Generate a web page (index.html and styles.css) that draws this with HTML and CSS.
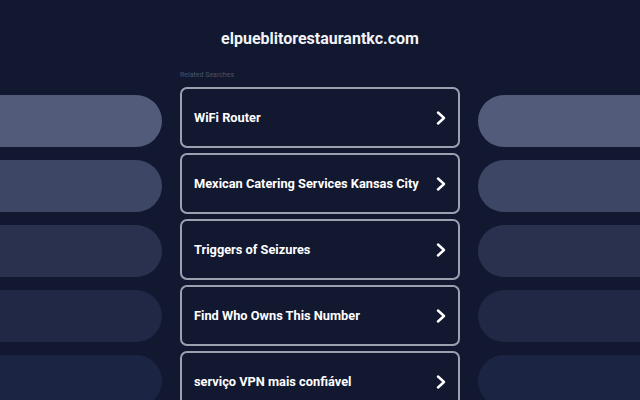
FILE: index.html
```
<!DOCTYPE html>
<html>
<head>
<meta charset="utf-8">
<link rel="stylesheet" href="styles.css">
</head>
<body>
<header class="top">
  <h1 class="domain">elpueblitorestaurantkc.com</h1>
</header>
<main class="layout">
  <div class="bars bars-left">
    <div class="bar b1"></div>
    <div class="bar b2"></div>
    <div class="bar b3"></div>
    <div class="bar b4"></div>
    <div class="bar b5"></div>
  </div>
  <section class="center">
    <div class="label">Related Searches</div>
    <a class="card" href="#"><span>WiFi Router</span><svg class="chev" viewBox="0 0 10 14"><polyline points="2,1.5 8,7 2,12.5"/></svg></a>
    <a class="card" href="#"><span>Mexican Catering Services Kansas City</span><svg class="chev" viewBox="0 0 10 14"><polyline points="2,1.5 8,7 2,12.5"/></svg></a>
    <a class="card" href="#"><span>Triggers of Seizures</span><svg class="chev" viewBox="0 0 10 14"><polyline points="2,1.5 8,7 2,12.5"/></svg></a>
    <a class="card" href="#"><span>Find Who Owns This Number</span><svg class="chev" viewBox="0 0 10 14"><polyline points="2,1.5 8,7 2,12.5"/></svg></a>
    <a class="card" href="#"><span>serviço VPN mais confiável</span><svg class="chev" viewBox="0 0 10 14"><polyline points="2,1.5 8,7 2,12.5"/></svg></a>
  </section>
  <div class="bars bars-right">
    <div class="bar b1"></div>
    <div class="bar b2"></div>
    <div class="bar b3"></div>
    <div class="bar b4"></div>
    <div class="bar b5"></div>
  </div>
</main>
</body>
</html>
```
FILE: styles.css
```
html, body {
  margin: 0;
  padding: 0;
  height: 100%;
  overflow: hidden;
}
body {
  background: #121830;
  font-family: Roboto, "Liberation Sans", Arial, sans-serif;
  color: #ffffff;
}
.top {
  padding-top: 29px;
  text-align: center;
}
.domain {
  margin: 0;
  font-size: 16px;
  line-height: 20px;
  font-weight: bold;
  color: #f2f3f6;
}
.layout {
  margin-top: 21px;
  display: grid;
  grid-template-columns: 162px 280px 162px;
  column-gap: 18px;
}
.bars {
  padding-top: 25px;
  display: flex;
  flex-direction: column;
  gap: 13px;
}
.bar {
  height: 52px;
}
.bars-left .bar { border-radius: 0 26px 26px 0; }
.bars-right .bar { border-radius: 26px 0 0 26px; }
.b1 { background: #525b79; }
.b2 { background: #3e4665; }
.b3 { background: #29314f; }
.b4 { background: #202846; }
.b5 { background: #1c2444; }
.center {
  display: flex;
  flex-direction: column;
}
.label {
  font-size: 7px;
  line-height: 10px;
  color: #4c536a;
  margin-bottom: 7px;
}
.card {
  box-sizing: border-box;
  height: 61px;
  margin-bottom: 5px;
  border: 2px solid #9ca1b0;
  border-radius: 7px;
  display: flex;
  align-items: center;
  justify-content: space-between;
  padding: 0 12px 0 12px;
  text-decoration: none;
  color: #ffffff;
  font-size: 12.8px;
  font-weight: bold;
}
.chev {
  width: 10px;
  height: 14px;
  fill: none;
  stroke: #ffffff;
  stroke-width: 2.4;
  stroke-linecap: round;
  stroke-linejoin: round;
}
```
